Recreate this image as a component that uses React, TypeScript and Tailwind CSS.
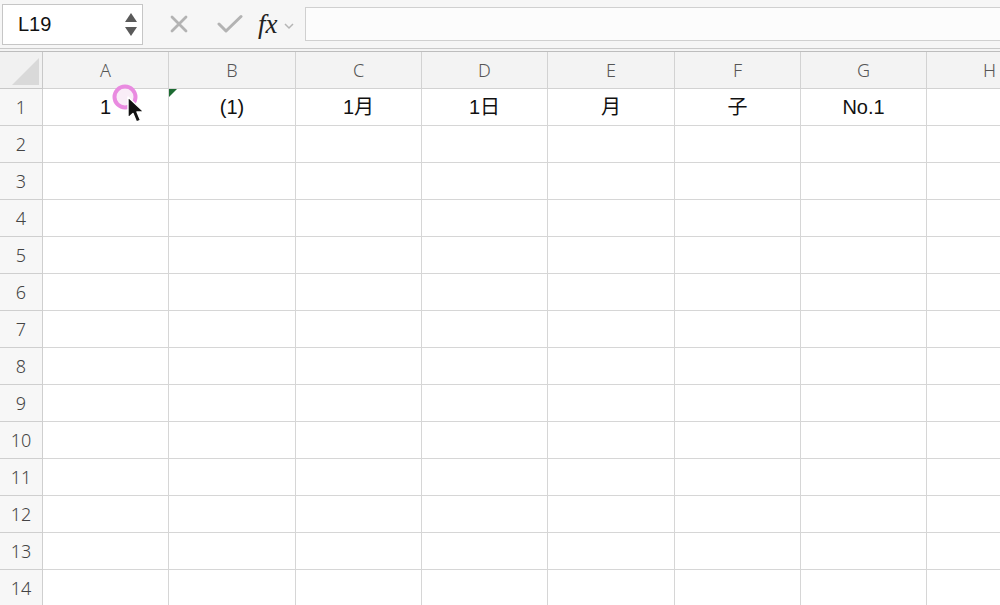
import React from "react";

const cols = [
  { k: "A", w: "w-[126px]" },
  { k: "B", w: "w-[127px]" },
  { k: "C", w: "w-[126px]" },
  { k: "D", w: "w-[126px]" },
  { k: "E", w: "w-[127px]" },
  { k: "F", w: "w-[126px]" },
  { k: "G", w: "w-[126px]" },
  { k: "H", w: "w-[126px]" },
];

const row1: Record<string, string> = {
  A: "1",
  B: "(1)",
  C: "1月",
  D: "1日",
  E: "月",
  F: "子",
  G: "No.1",
  H: "",
};

const font = { fontFamily: '"Noto Sans", "Noto Sans CJK JP", sans-serif' };
const cellFont = { fontFamily: '"Liberation Sans", "Noto Sans CJK JP", sans-serif' };

export default function App() {
  const rows = Array.from({ length: 14 }, (_, i) => i + 1);
  return (
    <div className="w-[1000px] h-[605px] overflow-hidden bg-white relative" style={font}>
      {/* Formula bar */}
      <div className="h-[49px] bg-[#f6f6f6] flex items-center border-b border-[#c9c9c9]">
        <div className="ml-[2px] w-[141px] h-[41px] bg-white border border-[#c6c6c6] flex items-center justify-between pl-[15px] pr-[5px]">
          <span className="text-[20px] text-[#111]" style={cellFont}>L19</span>
          <div className="flex flex-col gap-[5px] items-center">
            <svg width="12" height="9" viewBox="0 0 12 9"><path d="M6 0 L12 9 L0 9 Z" fill="#5a5a5a" /></svg>
            <svg width="12" height="9" viewBox="0 0 12 9"><path d="M0 0 L12 0 L6 9 Z" fill="#5a5a5a" /></svg>
          </div>
        </div>
        <div className="w-[26px]" />
        <svg width="20" height="20" viewBox="0 0 20 20">
          <path d="M3 3 L17 17 M17 3 L3 17" stroke="#b3b3b3" strokeWidth="2.8" strokeLinecap="round" />
        </svg>
        <div className="w-[28px]" />
        <svg width="26" height="20" viewBox="0 0 26 20">
          <path d="M2 10 L9 17 L24 2.5" stroke="#b3b3b3" strokeWidth="3" fill="none" strokeLinecap="round" strokeLinejoin="round" />
        </svg>
        <span className="ml-[15px] text-[27px] italic text-[#222] leading-none" style={{ fontFamily: '"Liberation Serif", serif' }}>fx</span>
        <svg width="12" height="8" viewBox="0 0 12 8" className="ml-[5px] mt-[4px]">
          <path d="M2 2 L6 6 L10 2" stroke="#b5b5b5" strokeWidth="1.5" fill="none" />
        </svg>
        <div className="ml-[10px] flex-1 h-[34px] bg-[#fcfcfc] border border-[#d0d0d0] border-r-0" />
      </div>
      <div className="h-[3px] bg-[#f4f4f4] border-b border-[#bdbdbd]" />

      {/* Grid */}
      <div className="flex flex-col">
        {/* header row */}
        <div className="flex h-[37px]">
          <div className="w-[43px] shrink-0 bg-[#f1f1f1] border-r border-b border-[#c8c8c8] relative">
            <svg width="27" height="27" viewBox="0 0 27 27" className="absolute right-[3px] bottom-[3px]">
              <path d="M27 0 L27 27 L0 27 Z" fill="#d9d9d9" />
            </svg>
          </div>
          {cols.map((c) => (
            <div
              key={c.k}
              className={`${c.w} shrink-0 bg-[#f3f3f3] border-r border-b border-[#d2d2d2] flex items-center justify-center text-[18px] text-[#555] font-light`}
            >
              {c.k}
            </div>
          ))}
        </div>
        {rows.map((r) => (
          <div key={r} className="flex h-[37px]">
            <div className="w-[43px] shrink-0 bg-[#f7f7f7] border-r border-b border-[#cfcfcf] flex items-center justify-center text-[18px] text-[#444] font-light">
              {r}
            </div>
            {cols.map((c) => (
              <div
                key={c.k}
                className={`${c.w} shrink-0 border-r border-b border-[#d6d6d6] flex items-center justify-center text-[20px] text-[#111] relative`}
                style={cellFont}
              >
                {r === 1 ? row1[c.k] : ""}
                {r === 1 && c.k === "B" && (
                  <svg width="8" height="8" viewBox="0 0 8 8" className="absolute left-0 top-0">
                    <path d="M0 0 L8 0 L0 8 Z" fill="#1d6b32" />
                  </svg>
                )}
              </div>
            ))}
          </div>
        ))}
      </div>

      {/* cursor overlay */}
      <svg width="50" height="50" viewBox="0 0 50 50" className="absolute left-[103px] top-[75px]">
        <circle cx="22" cy="22" r="10.5" fill="#f6e6f4" fillOpacity="0.7" stroke="#e98be0" strokeWidth="4" />
        <path d="M25 22 L25 43 L30 38.5 L33.5 47 L37.5 45.3 L34 37 L41 37 Z" fill="#111" stroke="#fff" strokeWidth="1.4" strokeLinejoin="round" />
      </svg>
    </div>
  );
}
